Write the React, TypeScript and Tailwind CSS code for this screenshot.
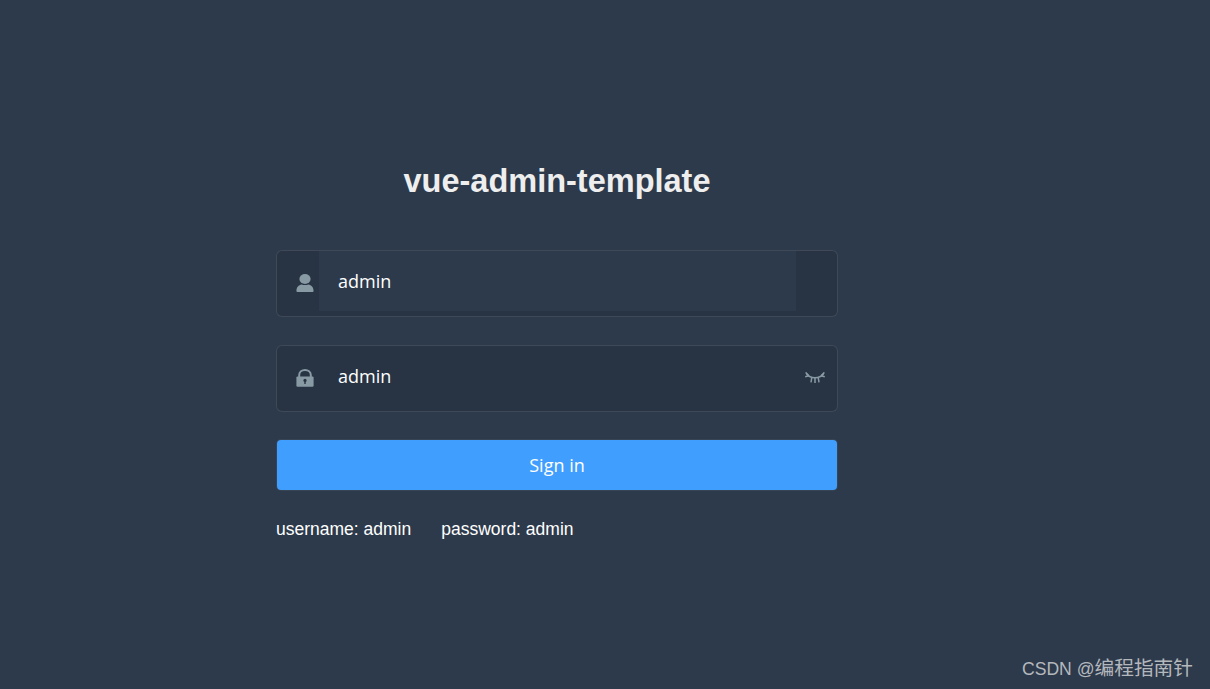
import React from 'react';

const UserIcon = () => (
  <svg width="18" height="18" viewBox="0 0 18 18" className="text-[#889aa4]" fill="currentColor">
    <ellipse cx="9" cy="5" rx="5.6" ry="5" />
    <path d="M0.4 17 C0.4 13 2.8 10.8 5.6 10.4 C7.6 11.2 10.4 11.2 12.4 10.4 C15.2 10.8 17.6 13 17.6 17 Q17.6 18 16.6 18 H1.4 Q0.4 18 0.4 17 Z" />
  </svg>
);

const LockIcon = () => (
  <svg width="18" height="18" viewBox="0 0 18 18" className="text-[#889aa4]">
    <path d="M3.2 8 V6 C3.2 2.8 6 1 9 1 C12 1 14.8 2.8 14.8 6 V8" fill="none" stroke="currentColor" strokeWidth="2" />
    <rect x="0.4" y="7.4" width="17.2" height="10.4" rx="1.2" fill="currentColor" />
    <circle cx="9" cy="11.4" r="1.6" fill="#283443" />
    <rect x="8.3" y="11.6" width="1.4" height="3.4" fill="#283443" />
  </svg>
);

const EyeClosedIcon = () => (
  <svg width="20" height="12" viewBox="0 0 20 12" fill="none" stroke="#889aa4" strokeWidth="1.5" className="block">
    <path d="M1.5 2 C5.5 7 14.5 7 18.5 2" />
    <path d="M0.6 0.4 L4 3.8 M19.4 0.4 L16 3.8 M0.2 4.8 L4 3.8 M19.8 4.8 L16 3.8 M6.8 5.4 L6 10.4 M13.2 5.4 L14 10.4 M10 6 L10 11" />
  </svg>
);

const App: React.FC = () => {
  return (
    <div className="relative h-[689px] w-full overflow-hidden bg-[#2d3a4b] font-['Liberation_Sans',sans-serif]">
      <div className="ml-[276px] w-[562px] pt-[161px]">
        <h3 className="text-center text-[32.5px] leading-[40px] font-bold text-[#eeeeee]">vue-admin-template</h3>

        {/* usuario */}
        <div className="mt-[49px] flex h-[67px] rounded-[6px] border border-white/10 bg-[#283443]">
          <span className="flex w-[42px] items-center justify-center pl-[13px] pb-[1px]">
            <UserIcon />
          </span>
          <div className="h-[60px] w-[477px] bg-[#2d3a4b] pl-[19px] font-['Open_Sans',sans-serif] text-[18px] leading-[60px] text-white">
            admin
          </div>
        </div>

        {/* password */}
        <div className="mt-[28px] flex h-[67px] items-start rounded-[6px] border border-white/10 bg-[#283443]">
          <span className="flex h-[65px] w-[42px] items-center justify-center pl-[13px] pb-[1px]">
            <LockIcon />
          </span>
          <div className="h-[60px] flex-1 pl-[19px] font-['Open_Sans',sans-serif] text-[18px] leading-[60px] text-white">
            admin
          </div>
          <span className="mt-[26px] mr-[12px]">
            <EyeClosedIcon />
          </span>
        </div>

        <button className="mt-[27px] block h-[52px] w-full rounded-[5px] border border-white/5 bg-[#409eff] bg-clip-padding font-['Open_Sans',sans-serif] text-[18px] text-white">
          Sign in
        </button>

        <div className="mt-[28px] flex text-[17.5px] leading-[20px] text-white">
          <span className="mr-[30px]">username: admin</span>
          <span>password: admin</span>
        </div>
      </div>

      <div className="absolute right-[17px] bottom-[8px] font-['Liberation_Sans','Noto_Sans_CJK_SC',sans-serif] text-[17.6px] leading-[24px] text-[#b4b8bd]">
        CSDN @<span className="text-[19.7px]">编程指南针</span>
      </div>
    </div>
  );
};

export default App;
